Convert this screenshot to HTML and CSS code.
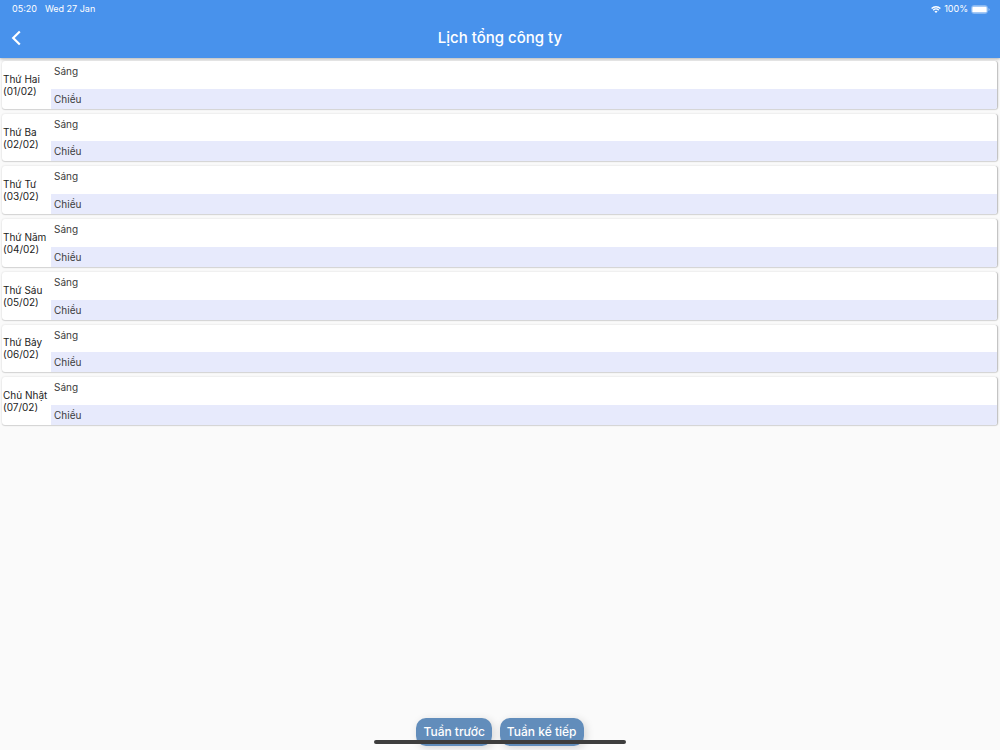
FILE: index.html
```html
<!DOCTYPE html>
<html lang="vi">
<head>
<meta charset="utf-8">
<meta name="viewport" content="width=device-width, initial-scale=1">
<title>Lịch tổng công ty</title>
<link rel="stylesheet" href="styles.css">
</head>
<body>
<header class="top">
  <div class="status">
    <span class="status-left"><span>05:20</span><span lang="en">Wed 27 Jan</span></span>
    <span class="status-right">
      <svg class="wifi" viewBox="0 0 20 14" aria-hidden="true"><path d="M1.2 5a12.6 12.6 0 0 1 17.6 0M4.400 8.400a8 8 0 0 1 11.200 0" fill="none" stroke="currentColor" stroke-width="2.800"/><path d="M10 13.800 6.900 10.800a4.400 4.400 0 0 1 6.200 0z" fill="currentColor"/></svg>
      <span>100%</span>
      <svg class="battery" viewBox="0 0 38 18" aria-hidden="true"><rect x="1" y="1" width="32" height="16" rx="5" fill="none" stroke="currentColor" stroke-opacity=".35" stroke-width="2"/><rect x="2.500" y="3" width="29" height="12" rx="2.500" fill="currentColor"/><path d="M35 6q2.400 1 2.400 3t-2.400 3z" fill="currentColor" fill-opacity=".45"/></svg>
    </span>
  </div>
  <div class="nav">
    <button class="back" type="button" aria-label="Quay lại"><svg viewBox="0 0 10 16" aria-hidden="true"><path d="M8.800 1.500 2.200 8l6.600 6.500" fill="none" stroke="currentColor" stroke-width="2.200"/></svg></button>
    <h1 class="title">Lịch tổng công ty</h1>
  </div>
</header>
<main class="week">
  <section class="day"><h2 class="date">Thứ Hai<br>(01/02)</h2><div class="slots"><p class="slot">Sáng</p><p class="slot slot-pm">Chiều</p></div></section>
  <section class="day"><h2 class="date">Thứ Ba<br>(02/02)</h2><div class="slots"><p class="slot">Sáng</p><p class="slot slot-pm">Chiều</p></div></section>
  <section class="day"><h2 class="date">Thứ Tư<br>(03/02)</h2><div class="slots"><p class="slot">Sáng</p><p class="slot slot-pm">Chiều</p></div></section>
  <section class="day"><h2 class="date">Thứ Năm<br>(04/02)</h2><div class="slots"><p class="slot">Sáng</p><p class="slot slot-pm">Chiều</p></div></section>
  <section class="day"><h2 class="date">Thứ Sáu<br>(05/02)</h2><div class="slots"><p class="slot">Sáng</p><p class="slot slot-pm">Chiều</p></div></section>
  <section class="day"><h2 class="date">Thứ Bảy<br>(06/02)</h2><div class="slots"><p class="slot">Sáng</p><p class="slot slot-pm">Chiều</p></div></section>
  <section class="day"><h2 class="date">Chủ Nhật<br>(07/02)</h2><div class="slots"><p class="slot">Sáng</p><p class="slot slot-pm">Chiều</p></div></section>
</main>
<footer class="pager">
  <button class="week-btn" type="button">Tuần trước</button>
  <button class="week-btn" type="button">Tuần kế tiếp</button>
  <div class="home-bar"></div>
</footer>
</body>
</html>
```
FILE: styles.css
```css
* { box-sizing: border-box; }
body {
  margin: 0;
  min-height: 100vh;
  display: flex;
  flex-direction: column;
  background: #fafafa;
  color: #222;
  font: 10px/12px Inter, "Liberation Sans", sans-serif;
}
h1, h2, p { margin: 0; font-weight: 400; }
.top {
  background: #4892ec;
  color: #fff;
  box-shadow: 0 1px 3px rgba(0, 0, 0, .3);
}
.status {
  display: flex;
  justify-content: space-between;
  height: 18px;
  padding: 0 10px 0 12px;
  font-size: 9px;
  line-height: 18px;
}
.status-left { display: flex; gap: 8px; }
.status-right { display: flex; align-items: center; gap: 3px; }
.wifi { width: 10px; height: 7px; }
.battery { width: 19px; height: 9px; }
.nav {
  display: grid;
  grid-template-columns: 32px 1fr 32px;
  align-items: center;
  height: 40px;
}
.back {
  display: flex;
  justify-content: center;
  padding: 0;
  border: 0;
  background: none;
  color: inherit;
}
.back svg { width: 10px; height: 16px; }
.title {
  text-align: center;
  font-size: 15px;
  line-height: 20px;
  font-weight: 500;
}
.week {
  display: grid;
  grid-auto-rows: 1fr;
  gap: 5px;
  min-height: 364px;
  margin: 3px 2px 0;
}
.day {
  display: flex;
  overflow: hidden;
  border-radius: 3px;
  background: #fff;
  box-shadow: 0 0 2px rgba(0, 0, 0, .15), 0 1px 1px rgba(0, 0, 0, .12);
  border-right: 1px solid #c4c4c4;
}
.date {
  display: flex;
  flex-direction: column;
  justify-content: center;
  width: 49px;
  padding-left: 1px;
  font-size: 10px;
  line-height: 12px;
  white-space: nowrap;
}
.slots { flex: 1; display: flex; flex-direction: column; }
.slot { flex: 1; padding: 4px 3px; color: #3c3c3c; }
.slot-pm { flex: 0 0 20px; background: #e7eafc; }
.pager {
  position: relative;
  display: flex;
  justify-content: center;
  gap: 8px;
  margin-top: auto;
  padding-bottom: 4px;
}
.week-btn {
  height: 28px;
  padding: 0 7px;
  border: 0;
  border-radius: 10px;
  background: #628dbb;
  color: #fff;
  font: 500 12px/28px Inter, "Liberation Sans", sans-serif;
  box-shadow: 2px 2px 8px rgba(0, 0, 0, .15);
}
.home-bar {
  position: absolute;
  bottom: 6px;
  left: 50%;
  width: 252px;
  height: 4px;
  margin-left: -126px;
  border-radius: 2px;
  background: #3d3d3d;
}
```
